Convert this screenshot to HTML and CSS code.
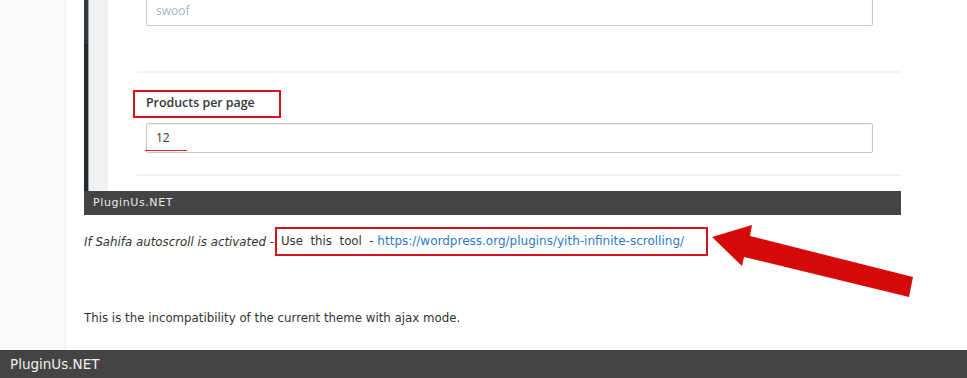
FILE: index.html
```html
<!DOCTYPE html>
<html lang="en">
<head>
  <meta charset="UTF-8">
  <title>Ajax mode</title>
  <link rel="stylesheet" href="styles.css">
</head>
<body>
  <div class="page">
    <div class="sidebar"></div>

    <div class="main">
      <div class="figure">
        <div class="frame">
          <div class="frame-edge"></div>
          <div class="frame-gutter"></div>
          <div class="shot">
            <div class="field first">
              <div class="input placeholder">swoof</div>
            </div>
            <div class="sep"></div>
            <div class="label-box">Products per page</div>
            <div class="field">
              <div class="input">12</div>
              <div class="underline"></div>
            </div>
            <div class="sep second"></div>
          </div>
        </div>
        <div class="caption">PluginUs.NET</div>
      </div>

      <p class="tip">
        <em>If Sahifa autoscroll is activated</em>&nbsp;-
        <span class="mark">Use&nbsp; this&nbsp; tool&nbsp; - <a href="#">https://wordpress.org/plugins/yith-infinite-scrolling/</a></span>
      </p>

      <p class="note">This is the incompatibility of the current theme with ajax mode.</p>
    </div>

    <!-- pfeil -->
    <svg class="arrow" width="967" height="378" viewBox="0 0 967 378">
      <polygon points="712,237 752,225 750,236 913,277 909,297 744,257 742,266" fill="#d60808"/>
    </svg>
  </div>

  <div class="footer">PluginUs.NET</div>
</body>
</html>
```

FILE: styles.css
```css
* {
  box-sizing: border-box;
}
body {
  margin: 0;
  height: 378px;
  overflow: hidden;
  font-family: "DejaVu Sans", Verdana, sans-serif;
  font-size: 11.8px;
  color: #333;
  background: #fff;
}
.page {
  display: flex;
  height: 350px;
  position: relative;
}
.sidebar {
  width: 66px;
  background: #f9f9f9;
  border-right: 1px solid #eeeeee;
}
.main {
  padding-left: 18px;
  width: 835px;
}
.figure {
  width: 817px;
}
.frame {
  display: flex;
  height: 191px;
  overflow: hidden;
}
.frame-edge {
  width: 4px;
  background: linear-gradient(#32373c 0, #32373c 44px, #23282d 44px);
}
.frame-gutter {
  width: 20px;
  background: #f1f1f1;
  border-left: 1px solid #9aa3a8;
}
.shot {
  flex: 1;
  background: #fff;
  font-family: "Open Sans", sans-serif;
}
.field {
  position: relative;
  margin-left: 38px;
  width: 727px;
}
.field.first {
  margin-top: -4px;
}
.input {
  height: 30px;
  border: 1px solid #c8c8c8;
  border-radius: 2px;
  box-shadow: inset 0 1px 2px rgba(0, 0, 0, 0.07);
  padding: 0 9px;
  font-size: 12px;
  line-height: 28px;
  color: #333;
}
.input.placeholder {
  color: #a3b6d0;
  font-size: 12px;
}
.underline {
  position: absolute;
  left: -1px;
  top: 27px;
  width: 42px;
  height: 1px;
  border-top: 1.5px solid #d9252a;
}
.sep {
  margin-top: 45px;
  margin-left: 29px;
  height: 2px;
  background: #f1f3f3;
}
.sep.second {
  margin-top: 21px;
}
.label-box {
  margin: 17px 0 5px 25px;
  width: 148px;
  height: 28px;
  border: 2px solid #d4141b;
  padding-left: 11px;
  font-size: 12.4px;
  font-weight: 600;
  line-height: 22px;
  color: #32373c;
}
.caption {
  height: 24px;
  background: #444444;
  color: #e8e8e8;
  font-size: 11px;
  letter-spacing: 0.6px;
  line-height: 24px;
  padding-left: 9px;
}
.tip {
  margin: 12px 0 0;
  display: flex;
  align-items: center;
  height: 29px;
  white-space: nowrap;
}
.tip em {
  color: #333;
}
.mark {
  margin-left: 1px;
  height: 29px;
  width: 433px;
  border: 2px solid #d4141b;
  padding-left: 4px;
  line-height: 25px;
}
.mark a {
  color: #2b7bc6;
  font-size: 12px;
  text-decoration: none;
}
.note {
  margin: 55px 0 0;
}
.arrow {
  position: absolute;
  left: 0;
  top: 0;
  pointer-events: none;
}
.footer {
  height: 28px;
  background: #444444;
  color: #f0f0f0;
  font-size: 13.5px;
  line-height: 28px;
  padding-left: 10px;
}
```
